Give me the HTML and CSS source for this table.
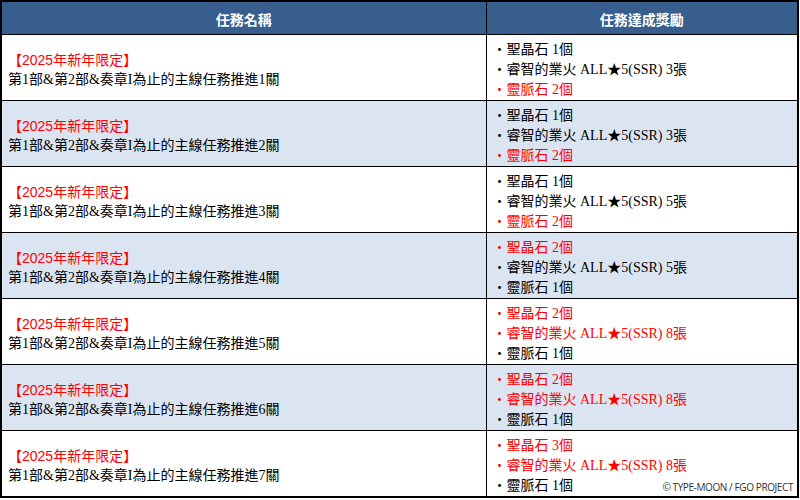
FILE: index.html
```html
<!DOCTYPE html>
<html lang="zh-Hant">
<head>
<meta charset="utf-8">
<title>任務</title>
<link rel="stylesheet" href="styles.css">
</head>
<body>
<div class="wrap">
<table class="missions">
<colgroup><col class="c1"><col class="c2"></colgroup>
<thead>
<tr><th>任務名稱</th><th>任務達成獎勵</th></tr>
</thead>
<tbody>
<tr>
<td class="name"><div class="tag">【2025年新年限定】</div><div class="desc">第1部&amp;第2部&amp;奏章I為止的主線任務推進1關</div></td>
<td class="reward"><div class="li">・聖晶石 1個</div><div class="li">・睿智的業火 ALL★5(SSR) 3張</div><div class="li red">・靈脈石 2個</div></td>
</tr>
<tr class="alt">
<td class="name"><div class="tag">【2025年新年限定】</div><div class="desc">第1部&amp;第2部&amp;奏章I為止的主線任務推進2關</div></td>
<td class="reward"><div class="li">・聖晶石 1個</div><div class="li">・睿智的業火 ALL★5(SSR) 3張</div><div class="li red">・靈脈石 2個</div></td>
</tr>
<tr>
<td class="name"><div class="tag">【2025年新年限定】</div><div class="desc">第1部&amp;第2部&amp;奏章I為止的主線任務推進3關</div></td>
<td class="reward"><div class="li">・聖晶石 1個</div><div class="li">・睿智的業火 ALL★5(SSR) 5張</div><div class="li red">・靈脈石 2個</div></td>
</tr>
<tr class="alt">
<td class="name"><div class="tag">【2025年新年限定】</div><div class="desc">第1部&amp;第2部&amp;奏章I為止的主線任務推進4關</div></td>
<td class="reward"><div class="li red">・聖晶石 2個</div><div class="li">・睿智的業火 ALL★5(SSR) 5張</div><div class="li">・靈脈石 1個</div></td>
</tr>
<tr>
<td class="name"><div class="tag">【2025年新年限定】</div><div class="desc">第1部&amp;第2部&amp;奏章I為止的主線任務推進5關</div></td>
<td class="reward"><div class="li red">・聖晶石 2個</div><div class="li red">・睿智的業火 ALL★5(SSR) 8張</div><div class="li">・靈脈石 1個</div></td>
</tr>
<tr class="alt">
<td class="name"><div class="tag">【2025年新年限定】</div><div class="desc">第1部&amp;第2部&amp;奏章I為止的主線任務推進6關</div></td>
<td class="reward"><div class="li red">・聖晶石 2個</div><div class="li red">・睿智的業火 ALL★5(SSR) 8張</div><div class="li">・靈脈石 1個</div></td>
</tr>
<tr>
<td class="name"><div class="tag">【2025年新年限定】</div><div class="desc">第1部&amp;第2部&amp;奏章I為止的主線任務推進7關</div></td>
<td class="reward"><div class="li red">・聖晶石 3個</div><div class="li red">・睿智的業火 ALL★5(SSR) 8張</div><div class="li">・靈脈石 1個</div></td>
</tr>
</tbody>
</table>
<div class="copy">© TYPE-MOON / FGO PROJECT</div>
</div>
</body>
</html>
```

FILE: styles.css
```css
html, body {
  margin: 0;
  padding: 0;
  background: #ffffff;
}
.wrap {
  position: relative;
  width: 799px;
}
.missions {
  border-collapse: collapse;
  table-layout: fixed;
  width: 799px;
  border: 2px solid #000000;
  font-size: 14px;
  color: #000000;
}
.c1 { width: 485px; }
.missions th {
  background: #385e8d;
  color: #ffffff;
  font-family: "Noto Sans CJK TC", sans-serif;
  font-weight: bold;
  font-size: 14px;
  height: 33px;
  box-sizing: border-box;
  padding: 2px 0 0 0;
  line-height: 20px;
  border: 1px solid #000000;
  border-top: 2px solid #000000;
  text-align: center;
  vertical-align: middle;
}
.missions td {
  border: 1px solid #000000;
  height: 66px;
  box-sizing: border-box;
  vertical-align: middle;
  line-height: 20px;
}
.alt td {
  background: #dbe5f1;
}
.name {
  padding: 5px 6px 0 6px;
}
.tag {
  color: #ff0000;
  font-family: "Liberation Sans", "Noto Sans CJK TC", sans-serif;
}
.desc {
  font-family: "Liberation Serif", "Noto Sans CJK TC", serif;
}
.reward {
  padding: 5px 5px 0 6px;
  font-family: "Liberation Serif", "Noto Sans CJK TC", serif;
}
.li {
  white-space: nowrap;
}
.red {
  color: #ff0000;
}
.copy {
  position: absolute;
  right: 6px;
  bottom: 5px;
  font-family: "Open Sans", "Liberation Sans", sans-serif;
  font-size: 10px;
  letter-spacing: -0.4px;
  line-height: 12px;
  color: #333333;
  text-shadow: 0 0 2px #ffffff;
}
```
